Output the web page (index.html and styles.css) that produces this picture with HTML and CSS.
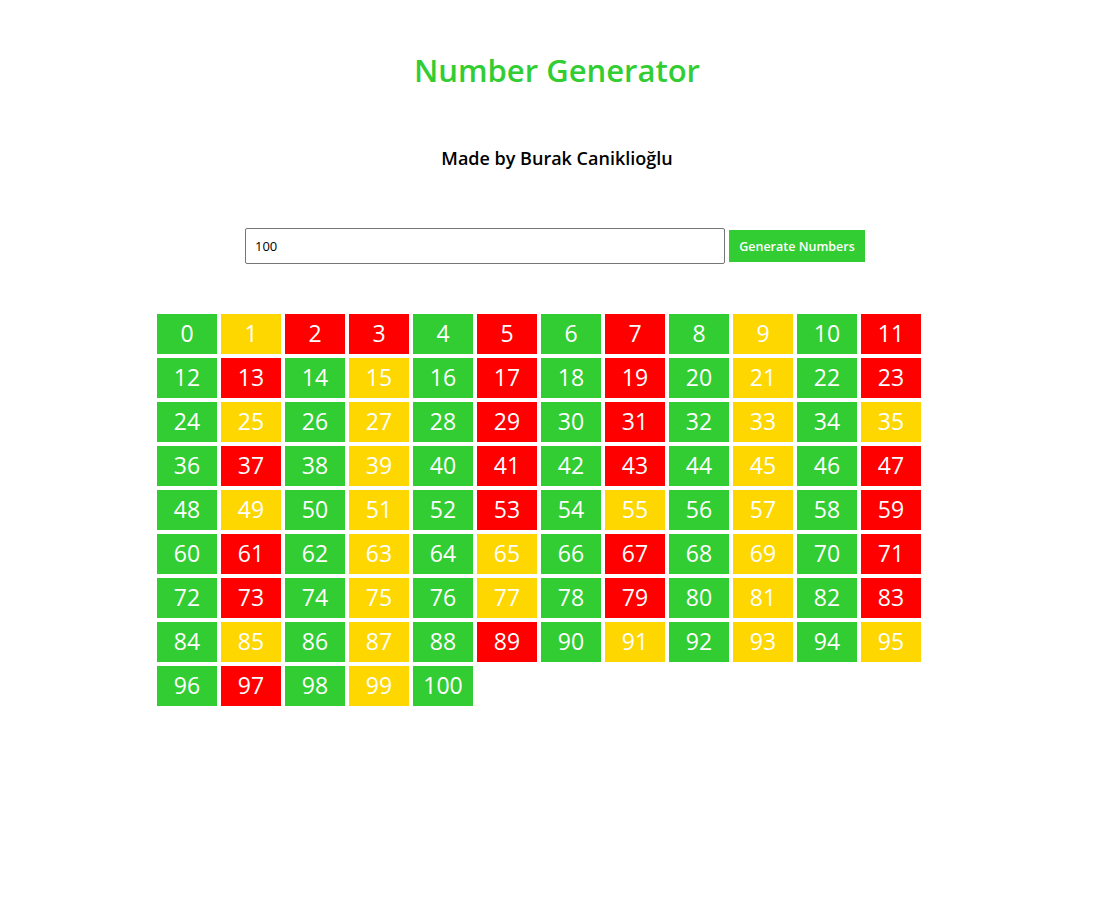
FILE: index.html
```html
<!DOCTYPE html>
<html>
<head>
<meta charset="utf-8">
<link rel="stylesheet" href="styles.css">
</head>
<body>
<h1 class="title">Number Generator</h1>
<h3 class="subtitle">Made by Burak Caniklioğlu</h3>
<div class="form">
  <input class="num-input" type="text" value="100">
  <button class="gen-btn">Generate Numbers</button>
</div>
<div class="grid" id="grid"></div>
<script>
  function isPrime(n){ if(n<2) return false; for(let i=2;i*i<=n;i++){ if(n%i===0) return false;} return true; }
  const g=document.getElementById('grid');
  for(let i=0;i<=100;i++){
    const d=document.createElement('div');
    d.className='box '+(i%2===0 && i!==2 ? 'even' : (isPrime(i)?'prime':'odd'));
    d.textContent=i;
    g.appendChild(d);
  }
</script>
</body>
</html>
```
FILE: styles.css
```css
html, body { margin: 0; padding: 0; background: #fff; }
body { font-family: "Open Sans", "Noto Sans", sans-serif; padding: 8px; }
.title {
  color: #32cd32;
  font-size: 31px;
  font-weight: 600;
  text-align: center;
  margin: 42px 0 0;
  line-height: 40px;
}
.subtitle {
  font-size: 18px;
  font-weight: 600;
  text-align: center;
  margin: 56px 0 0;
  line-height: 24px;
  color: #000;
}
.form {
  display: flex;
  justify-content: center;
  align-items: center;
  gap: 4px;
  margin-top: 58px;
  padding-right: 4px;
}
.num-input {
  width: 480px;
  height: 36px;
  box-sizing: border-box;
  border: 1px solid #767676;
  border-radius: 2px;
  padding: 0 9px;
  font-family: "Open Sans", sans-serif;
  font-size: 13px;
}
.gen-btn {
  background: #32cd32;
  color: #fff;
  border: none;
  height: 32px;
  width: 136px;
  padding: 0;
  font-family: "Open Sans", sans-serif;
  font-size: 12.5px;
  font-weight: 600;
}
.grid {
  display: grid;
  grid-template-columns: repeat(12, 60px);
  grid-auto-rows: 40px;
  gap: 4px;
  margin: 50px 0 0 149px;
}
.box {
  color: #fff;
  font-size: 23px;
  display: flex;
  align-items: center;
  justify-content: center;
  padding-bottom: 2px;
  box-sizing: border-box;
}
.even { background: #32cd32; }
.odd { background: #ffd700; }
.prime { background: #ff0000; }
```
